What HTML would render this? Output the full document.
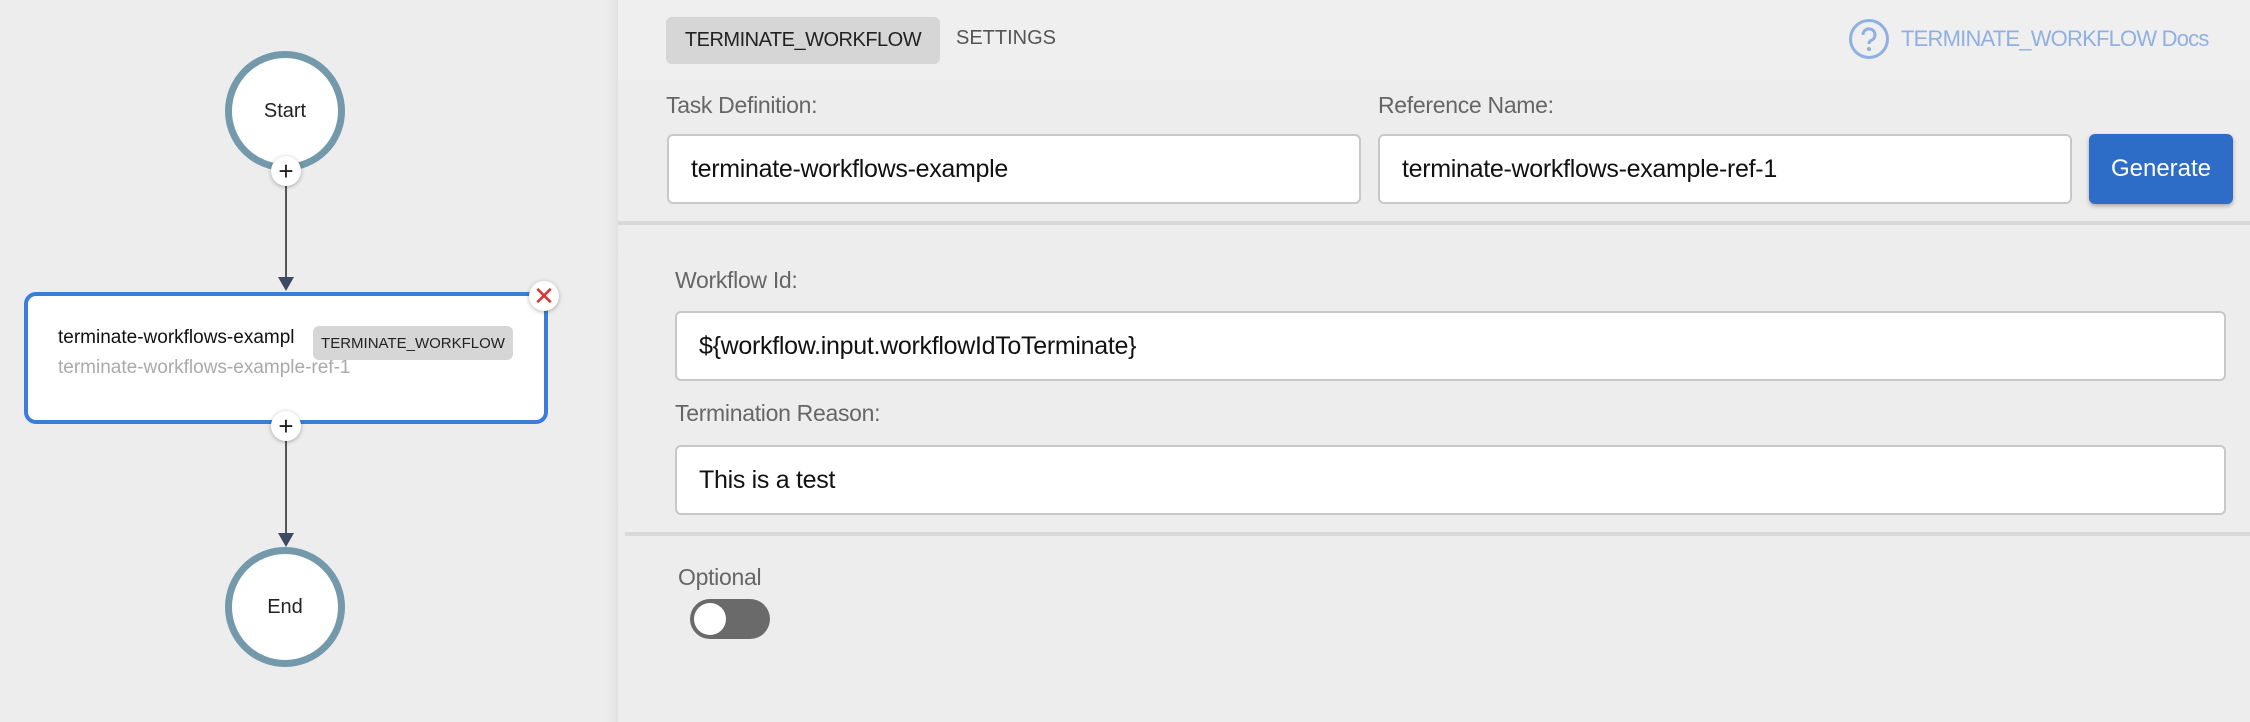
<!DOCTYPE html>
<html><head><meta charset="utf-8"><style>
*{box-sizing:border-box;margin:0;padding:0}
body{width:2250px;height:722px;background:#ededed;font-family:"Liberation Sans",sans-serif;position:relative;overflow:hidden}
.a{position:absolute}
.circ{position:absolute;width:120px;height:120px;border:7px solid #7399ab;border-radius:50%;background:#fff;display:flex;align-items:center;justify-content:center;font-size:20px;color:#222}
.plus{position:absolute;width:30px;height:30px;border-radius:50%;background:#fff;box-shadow:0 1px 4px rgba(0,0,0,.3);display:flex;align-items:center;justify-content:center;font-size:26px;color:#222;line-height:1}
.vline{position:absolute;width:2px;background:#555}
.arrow{position:absolute;width:0;height:0;border-left:8px solid transparent;border-right:8px solid transparent;border-top:14px solid #3e4a63}
.lbl{position:absolute;font-size:23px;color:#666;letter-spacing:-0.3px}
.inp{position:absolute;background:#fff;border:2px solid #c8c8c8;border-radius:6px;font-size:25px;color:#111;display:flex;align-items:center;padding-left:22px;letter-spacing:-0.3px}
.hr{position:absolute;height:4px;background:#d9d9d9}
</style></head><body>
<div class="circ" style="left:225px;top:51px">Start</div>
<div class="vline" style="left:285px;top:185px;height:100px"></div>
<div class="arrow" style="left:278px;top:277px"></div>
<div class="plus" style="left:271px;top:156px">+</div>
<div class="a" style="left:24px;top:292px;width:524px;height:132px;border:4px solid #3b7dd8;border-radius:12px;background:#fff"></div>
<div class="a" style="left:58px;top:327px;font-size:19px;color:#111;white-space:nowrap">terminate-workflows-exampl</div>
<div class="a" style="left:58px;top:357px;font-size:19px;color:#aaa;white-space:nowrap">terminate-workflows-example-ref-1</div>
<div class="a" style="left:313px;top:326px;width:200px;height:34px;background:#d6d6d6;border-radius:6px;font-size:15px;color:#222;display:flex;align-items:center;justify-content:center">TERMINATE_WORKFLOW</div>
<div class="plus" style="left:529px;top:281px;color:#d33;font-size:26px">✕</div>
<div class="vline" style="left:285px;top:440px;height:100px"></div>
<div class="arrow" style="left:278px;top:533px"></div>
<div class="plus" style="left:271px;top:411px">+</div>
<div class="circ" style="left:225px;top:547px">End</div>
<div class="a" style="left:606px;top:0;width:12px;height:722px;background:linear-gradient(to right,#ededed,#e2e2e2)"></div>
<div class="a" style="left:618px;top:0;width:1632px;height:80px;background:#efefef"></div>
<div class="a" style="left:666px;top:17px;width:274px;height:47px;background:#d6d6d6;border-radius:6px;font-size:20px;color:#222;display:flex;align-items:center;justify-content:center;letter-spacing:-0.5px">TERMINATE_WORKFLOW</div>
<div class="a" style="left:956px;top:27px;font-size:20px;color:#555">SETTINGS</div>
<svg class="a" style="left:1848px;top:18px" width="42" height="42" viewBox="0 0 42 42"><circle cx="21" cy="21" r="18.5" fill="none" stroke="#8fb0e0" stroke-width="3"/><path d="M15 17a6 6 0 1 1 8 5.5c-1.5.7-2 1.5-2 3.5" fill="none" stroke="#8fb0e0" stroke-width="3"/><circle cx="21" cy="31" r="2" fill="#8fb0e0"/></svg>
<div class="a" style="left:1901px;top:26px;font-size:22px;color:#8fb0e0;white-space:nowrap;letter-spacing:-0.8px">TERMINATE_WORKFLOW Docs</div>
<div class="lbl" style="left:666px;top:92px">Task Definition:</div>
<div class="inp" style="left:667px;top:134px;width:694px;height:70px">terminate-workflows-example</div>
<div class="lbl" style="left:1378px;top:92px">Reference Name:</div>
<div class="inp" style="left:1378px;top:134px;width:694px;height:70px">terminate-workflows-example-ref-1</div>
<div class="a" style="left:2089px;top:134px;width:144px;height:70px;background:#2d6cc7;border-radius:6px;color:#fff;font-size:24px;display:flex;align-items:center;justify-content:center;box-shadow:0 2px 4px rgba(0,0,0,.3)">Generate</div>
<div class="hr" style="left:618px;top:221px;width:1632px"></div>
<div class="lbl" style="left:675px;top:267px">Workflow Id:</div>
<div class="inp" style="left:675px;top:311px;width:1551px;height:70px">${workflow.input.workflowIdToTerminate}</div>
<div class="lbl" style="left:675px;top:400px">Termination Reason:</div>
<div class="inp" style="left:675px;top:445px;width:1551px;height:70px">This is a test</div>
<div class="hr" style="left:625px;top:532px;width:1625px"></div>
<div class="lbl" style="left:678px;top:564px">Optional</div>
<div class="a" style="left:690px;top:599px;width:80px;height:40px;background:#6a6a6a;border-radius:20px"></div>
<div class="a" style="left:694px;top:603px;width:32px;height:32px;background:#fff;border-radius:50%"></div>
</body></html>
